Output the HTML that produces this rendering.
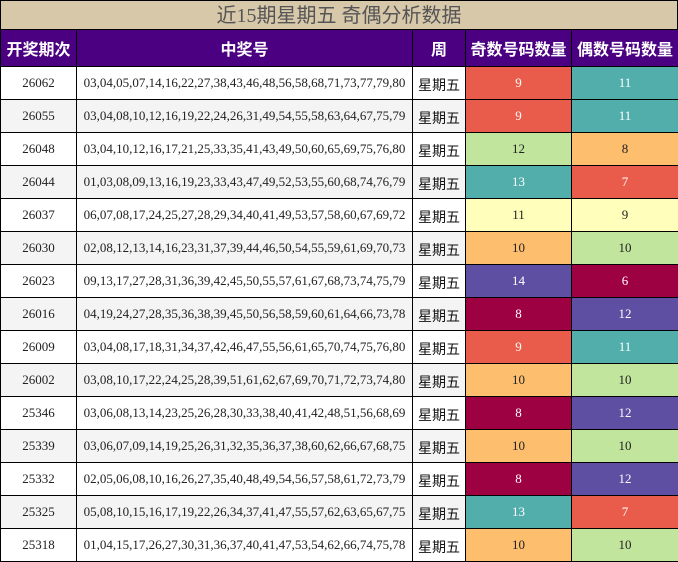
<!DOCTYPE html>
<html><head><meta charset="utf-8"><style>
body{margin:0;width:678px;height:562px;overflow:hidden;background:#fff;font-family:"Liberation Serif","Noto Sans CJK SC",serif;}
.t{position:absolute;left:0;top:0;width:676px;height:28px;border:1px solid #000;border-bottom:none;background:#d8c8aa;color:#555;font-size:20px;line-height:30px;text-align:center;}
table{position:absolute;left:0;top:29px;border-collapse:collapse;table-layout:fixed;width:678px;}
td,th{border:1px solid #000;text-align:center;padding:0;font-size:13px;}
th{background:#4b0082;color:#fff;height:36px;font-family:"Noto Sans CJK SC",sans-serif;font-size:16px;font-weight:bold;}
td{height:32px;color:#222;}
tr:nth-child(odd) td{background:#f4f4f4}
tr:nth-child(even) td{background:#fff}
td.w{font-family:"Noto Sans CJK SC",sans-serif;font-size:14px;padding-top:3px;height:29px;color:#111}
td.r{background:#e95c4b!important;color:#fff}
td.c{background:#52aeab!important;color:#fff}
td.g{background:#c2e59d!important;color:#222}
td.o{background:#fdbe6e!important;color:#222}
td.y{background:#ffffbb!important;color:#222}
td.p{background:#5e4fa2!important;color:#fff}
td.k{background:#9e0142!important;color:#fff}
</style></head><body>
<div class="t">近15期星期五 奇偶分析数据</div>
<table>
<colgroup><col style="width:76px"><col style="width:336px"><col style="width:53px"><col style="width:106px"><col style="width:107px"></colgroup>
<tr><th>开奖期次</th><th>中奖号</th><th>周</th><th>奇数号码数量</th><th>偶数号码数量</th></tr>
<tr><td>26062</td><td>03,04,05,07,14,16,22,27,38,43,46,48,56,58,68,71,73,77,79,80</td><td class="w">星期五</td><td class="r">9</td><td class="c">11</td></tr>
<tr><td>26055</td><td>03,04,08,10,12,16,19,22,24,26,31,49,54,55,58,63,64,67,75,79</td><td class="w">星期五</td><td class="r">9</td><td class="c">11</td></tr>
<tr><td>26048</td><td>03,04,10,12,16,17,21,25,33,35,41,43,49,50,60,65,69,75,76,80</td><td class="w">星期五</td><td class="g">12</td><td class="o">8</td></tr>
<tr><td>26044</td><td>01,03,08,09,13,16,19,23,33,43,47,49,52,53,55,60,68,74,76,79</td><td class="w">星期五</td><td class="c">13</td><td class="r">7</td></tr>
<tr><td>26037</td><td>06,07,08,17,24,25,27,28,29,34,40,41,49,53,57,58,60,67,69,72</td><td class="w">星期五</td><td class="y">11</td><td class="y">9</td></tr>
<tr><td>26030</td><td>02,08,12,13,14,16,23,31,37,39,44,46,50,54,55,59,61,69,70,73</td><td class="w">星期五</td><td class="o">10</td><td class="g">10</td></tr>
<tr><td>26023</td><td>09,13,17,27,28,31,36,39,42,45,50,55,57,61,67,68,73,74,75,79</td><td class="w">星期五</td><td class="p">14</td><td class="k">6</td></tr>
<tr><td>26016</td><td>04,19,24,27,28,35,36,38,39,45,50,56,58,59,60,61,64,66,73,78</td><td class="w">星期五</td><td class="k">8</td><td class="p">12</td></tr>
<tr><td>26009</td><td>03,04,08,17,18,31,34,37,42,46,47,55,56,61,65,70,74,75,76,80</td><td class="w">星期五</td><td class="r">9</td><td class="c">11</td></tr>
<tr><td>26002</td><td>03,08,10,17,22,24,25,28,39,51,61,62,67,69,70,71,72,73,74,80</td><td class="w">星期五</td><td class="o">10</td><td class="g">10</td></tr>
<tr><td>25346</td><td>03,06,08,13,14,23,25,26,28,30,33,38,40,41,42,48,51,56,68,69</td><td class="w">星期五</td><td class="k">8</td><td class="p">12</td></tr>
<tr><td>25339</td><td>03,06,07,09,14,19,25,26,31,32,35,36,37,38,60,62,66,67,68,75</td><td class="w">星期五</td><td class="o">10</td><td class="g">10</td></tr>
<tr><td>25332</td><td>02,05,06,08,10,16,26,27,35,40,48,49,54,56,57,58,61,72,73,79</td><td class="w">星期五</td><td class="k">8</td><td class="p">12</td></tr>
<tr><td>25325</td><td>05,08,10,15,16,17,19,22,26,34,37,41,47,55,57,62,63,65,67,75</td><td class="w">星期五</td><td class="c">13</td><td class="r">7</td></tr>
<tr><td>25318</td><td>01,04,15,17,26,27,30,31,36,37,40,41,47,53,54,62,66,74,75,78</td><td class="w">星期五</td><td class="o">10</td><td class="g">10</td></tr>
</table>
</body></html>
